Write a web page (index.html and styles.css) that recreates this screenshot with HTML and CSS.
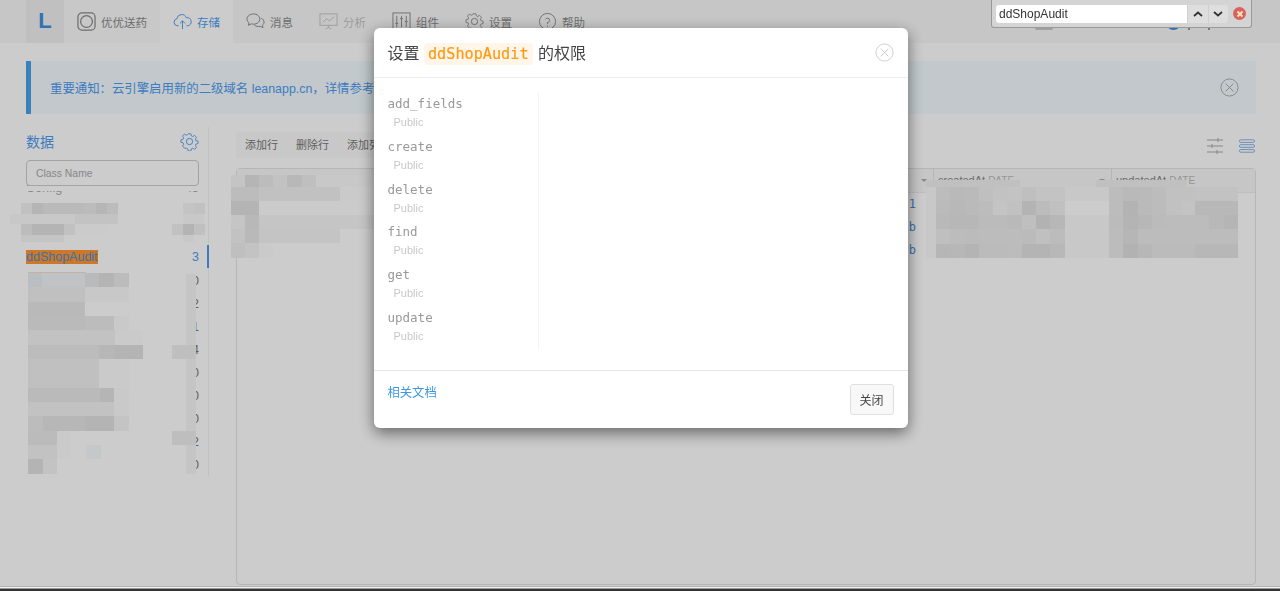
FILE: index.html
```html
<!DOCTYPE html>
<html lang="zh">
  <head>
    <meta charset="utf-8" />
    <title>ddShopAudit</title>
    <link rel="stylesheet" href="styles.css">
  </head>
  <body>
    <div id="wrap">
      <header class="topnav">
        <a class="logo" href="#">L</a>
        <a class="tab tab-app" href="#">
          <svg class="tab-icon" viewBox="0 0 20 20"><rect x="1" y="1" width="18" height="18" rx="4"/><circle cx="10" cy="10" r="6.2"/></svg>
          优优送药
        </a>
        <a class="tab active" href="#">
          <svg class="tab-icon" viewBox="0 0 20 20"><path d="M6 14.5H4.6A3.7 3.7 0 0 1 4 7.2 5.2 5.2 0 0 1 14 6a4.3 4.3 0 0 1 1.5 8.500H14"/><path d="M10 18V9.500M7.300 12 10 9.300l2.700 2.700"/></svg>
          存储
        </a>
        <a class="tab" href="#">
          <svg class="tab-icon" viewBox="0 0 20 20"><path d="M8 2C4.400 2 1 4.300 1 7.500c0 1.700 1 3 2.200 4L2.500 14l3-1.500c.8.200 1.600.3 2.500.3 3.600 0 6.500-2.300 6.500-5.300S11.600 2 8 2z"/><path d="M16 6.500c1.800.9 3 2.400 3 4.200 0 1.300-.6 2.400-1.700 3.300l.6 2.500-2.800-1.400c-2.400.6-5 0-6.500-1.600"/></svg>
          消息
        </a>
        <a class="tab tab-muted" href="#">
          <svg class="tab-icon" viewBox="0 0 20 20"><rect x="1" y="2" width="18" height="12"/><path d="M4 11l4-4 3 2.500L16 5M10 14v2.500M7 18l3-2 3 2"/></svg>
          分析
        </a>
        <a class="tab" href="#">
          <svg class="tab-icon" viewBox="0 0 20 20"><rect x="1" y="1" width="18" height="18"/><path d="M5 4v12M10 4v12M15 4v12M3.500 12h3M8.500 7h3M13.500 10h3"/></svg>
          组件
        </a>
        <a class="tab" href="#">
          <svg class="tab-icon" viewBox="0 0 20 20"><use href="#gear"/></svg>
          设置
        </a>
        <a class="tab" href="#">
          <svg class="tab-icon" viewBox="0 0 20 20"><circle cx="10" cy="10" r="8.500"/><path d="M7.800 7.800A2.300 2.300 0 1 1 10 11v1.500M10 14.300v1.200"/></svg>
          帮助
        </a>
        <div class="nav-right">
          <span class="nav-chip"></span>
          <span class="nav-avatar"></span>
          <span class="nav-tick"></span>
          <span class="nav-tick"></span>
        </div>
      </header>

      <div class="notice">
        <p>重要通知：云引擎启用新的二级域名 leanapp.cn，详情参考博客文章。</p>
        <svg class="close-icon" viewBox="0 0 20 20"><circle cx="10" cy="10" r="9"/><path d="M6 6l8 8M14 6l-8 8"/></svg>
      </div>

      <div class="content-wrap">
        <aside class="sidebar">
          <div class="side-title">
            <h2>数据</h2>
            <svg class="gear" viewBox="0 0 20 20"><use href="#gear"/></svg>
          </div>
          <input class="class-filter" type="text" placeholder="Class Name" />
          <ul class="class-list">
            <li class="clipped"><span>Config</span><b>45</b></li>
            <li><span></span><b></b></li>
            <li><span></span><b></b></li>
            <li class="selected"><span><mark>ddShopAudit</mark></span><b>3</b></li>
            <li><span></span><b>0</b></li>
            <li><span></span><b>2</b></li>
            <li><span></span><b>1</b></li>
            <li><span></span><b>4</b></li>
            <li><span></span><b>0</b></li>
            <li><span></span><b>0</b></li>
            <li><span></span><b>0</b></li>
            <li><span></span><b>2</b></li>
            <li><span></span><b>0</b></li>
          </ul>
        </aside>

        <section class="data-view">
          <div class="toolbar">
            <div class="toolbar-btns">
              <a href="#">添加行</a>
              <a href="#">删除行</a>
              <a href="#">添加列</a>
            </div>
            <div class="view-icons">
              <svg class="view-icon" viewBox="0 0 16 18"><path d="M0 3h16M0 9h16M0 15h16"/><path class="knob" d="M11 1v4M5 7v4M10 13v4"/></svg>
              <svg class="view-icon blue" viewBox="0 0 18 18"><rect x=".5" y="2" width="17" height="3" rx="1.500"/><rect x=".5" y="7.500" width="17" height="3" rx="1.500"/><rect x=".5" y="13" width="17" height="3" rx="1.500"/></svg>
            </div>
          </div>
          <div class="table-card">
            <div class="t-row t-head">
              <div class="t-col t-first"><i class="caret"></i></div>
              <div class="t-col t-date">createdAt <small>DATE</small><i class="caret"></i></div>
              <div class="t-col t-last">updatedAt <small>DATE</small></div>
            </div>
            <div class="t-row"><div class="t-col t-first t-id">1</div></div>
            <div class="t-row"><div class="t-col t-first t-id">b</div></div>
            <div class="t-row"><div class="t-col t-first t-id">b</div></div>
          </div>
        </section>
      </div>

      <!-- 打码区域 -->
      <svg class="mosaic" width="1280" height="591" shape-rendering="crispEdges">
        <g>
          <rect x="26" y="186" width="174" height="5" fill="#fff"/>
          <rect x="10" y="203" width="11" height="11" fill="#fcfcfc"/><rect x="21" y="203" width="11" height="11" fill="#eee"/><rect x="32" y="203" width="11" height="11" fill="#e0e0e0"/><rect x="43" y="203" width="42" height="11" fill="#e6e6e6"/><rect x="85" y="203" width="11" height="11" fill="#e8e8e8"/><rect x="96" y="203" width="11" height="11" fill="#e1e1e1"/><rect x="107" y="203" width="11" height="11" fill="#e8e8e8"/><rect x="118" y="203" width="22" height="11" fill="#fbfbfb"/><rect x="183" y="203" width="11" height="11" fill="#f1f1f1"/><rect x="194" y="203" width="11" height="11" fill="#eee"/>
          <rect x="10" y="214" width="108" height="10" fill="#f6f6f6"/><rect x="75" y="214" width="43" height="10" fill="#f0f0f0"/><rect x="183" y="214" width="21" height="10" fill="#f6f6f6"/>
          <rect x="10" y="224" width="11" height="11" fill="#fcfcfc"/><rect x="21" y="224" width="11" height="11" fill="#e8e8e8"/><rect x="32" y="224" width="32" height="11" fill="#dedede"/><rect x="64" y="224" width="11" height="11" fill="#eee"/><rect x="75" y="224" width="32" height="11" fill="#fafafa"/><rect x="172" y="224" width="11" height="11" fill="#eee"/><rect x="183" y="224" width="11" height="11" fill="#dfdfdf"/><rect x="194" y="224" width="11" height="11" fill="#ededed"/>
          <rect x="21" y="235" width="43" height="7" fill="#f1f1f1"/><rect x="75" y="235" width="21" height="7" fill="#fff"/><rect x="183" y="235" width="11" height="7" fill="#f6f6f6"/>
          <rect x="28" y="272" width="58" height="2" fill="#f4dcc8"/>
          <rect x="17" y="274" width="11" height="200" fill="#fbfbfb"/><rect x="186" y="274" width="10" height="200" fill="#f3f3f3"/>
          <rect x="28" y="273" width="14" height="14" fill="#e3eaee"/><rect x="42" y="273" width="43" height="14" fill="#ebf0f3"/><rect x="85" y="273" width="14" height="14" fill="#e4e6e8"/><rect x="99" y="273" width="15" height="14" fill="#dedede"/><rect x="114" y="273" width="15" height="14" fill="#e8e8e8"/><rect x="129" y="273" width="14" height="14" fill="#fbfbfb"/>
          <rect x="28" y="287" width="57" height="15" fill="#ececec"/><rect x="85" y="287" width="44" height="15" fill="#f7f7f7"/>
          <rect x="28" y="302" width="57" height="14" fill="#e5e5e5"/><rect x="85" y="302" width="30" height="14" fill="#fdfdfd"/>
          <rect x="28" y="316" width="57" height="14" fill="#e6e6e6"/><rect x="85" y="316" width="29" height="14" fill="#e9e9e9"/><rect x="114" y="316" width="15" height="14" fill="#f8f8f8"/>
          <rect x="28" y="330" width="87" height="15" fill="#efefef"/><rect x="115" y="330" width="28" height="15" fill="#f9f9f9"/>
          <rect x="28" y="345" width="71" height="14" fill="#e8e8e8"/><rect x="99" y="345" width="15" height="14" fill="#e2e2e2"/><rect x="114" y="345" width="29" height="14" fill="#dedede"/><rect x="172" y="345" width="24" height="14" fill="#ebebeb"/>
          <rect x="28" y="359" width="71" height="29" fill="#ededed"/><rect x="99" y="359" width="30" height="29" fill="#f9f9f9"/>
          <rect x="28" y="388" width="72" height="14" fill="#e6e6e6"/><rect x="100" y="388" width="14" height="14" fill="#e0e0e0"/><rect x="114" y="388" width="15" height="28" fill="#f8f8f8"/>
          <rect x="28" y="402" width="86" height="14" fill="#efefef"/>
          <rect x="28" y="416" width="15" height="15" fill="#e9e9e9"/><rect x="43" y="416" width="43" height="15" fill="#e2e2e2"/><rect x="86" y="416" width="28" height="15" fill="#dfdfdf"/><rect x="114" y="416" width="15" height="15" fill="#f2f2f2"/>
          <rect x="28" y="431" width="29" height="14" fill="#e7e7e7"/><rect x="57" y="431" width="14" height="14" fill="#f9f9f9"/><rect x="71" y="431" width="44" height="14" fill="#fdfdfd"/><rect x="172" y="431" width="24" height="14" fill="#eaeaea"/>
          <rect x="28" y="445" width="29" height="14" fill="#efefef"/><rect x="57" y="445" width="14" height="14" fill="#f9f9f9"/><rect x="86" y="445" width="15" height="14" fill="#f4f5f7"/>
          <rect x="28" y="459" width="15" height="15" fill="#dfdfdf"/><rect x="43" y="459" width="14" height="15" fill="#f0f0f0"/><rect x="57" y="459" width="14" height="15" fill="#fbfbfb"/>
        </g>
        <g>
          <rect x="231" y="175" width="14" height="12" fill="#f1f1f1"/><rect x="245" y="175" width="14" height="12" fill="#e0e0e0"/><rect x="259" y="175" width="14" height="12" fill="#e8e8e8"/><rect x="273" y="175" width="14" height="12" fill="#efefef"/><rect x="287" y="175" width="15" height="12" fill="#e3e3e3"/><rect x="302" y="175" width="14" height="12" fill="#ebebeb"/><rect x="316" y="175" width="58" height="12" fill="#f6f6f6"/>
          <rect x="231" y="187" width="28" height="14" fill="#e9e9e9"/><rect x="259" y="187" width="81" height="14" fill="#eee"/><rect x="340" y="187" width="34" height="14" fill="#f9f9f9"/>
          <rect x="231" y="201" width="28" height="14" fill="#dfdfdf"/><rect x="259" y="201" width="115" height="14" fill="#fafafa"/>
          <rect x="231" y="215" width="14" height="14" fill="#f3f3f3"/><rect x="245" y="215" width="14" height="14" fill="#e4e4e4"/><rect x="259" y="215" width="115" height="14" fill="#f3f3f3"/>
          <rect x="231" y="229" width="14" height="14" fill="#efefef"/><rect x="245" y="229" width="14" height="14" fill="#e5e5e5"/><rect x="259" y="229" width="81" height="14" fill="#f2f2f2"/><rect x="340" y="229" width="34" height="14" fill="#fbfbfb"/>
          <rect x="231" y="243" width="14" height="15" fill="#ebebeb"/><rect x="245" y="243" width="14" height="15" fill="#f0f0f0"/><rect x="259" y="243" width="14" height="15" fill="#f9f9f9"/>
        </g>
        <g>
          <rect x="926" y="180" width="94" height="7" fill="#ececec"/><rect x="1096" y="180" width="90" height="7" fill="#ececec"/>
          <rect x="926" y="187" width="10" height="71" fill="#f7f7f7"/><rect x="1065" y="187" width="44" height="71" fill="#f6f6f6"/><rect x="1065" y="201" width="15" height="14" fill="#fbfbfb"/><rect x="1080" y="201" width="29" height="14" fill="#fbfbfb"/>
          <rect x="936" y="187" width="14" height="14" fill="#e8e8e8"/><rect x="950" y="187" width="15" height="14" fill="#e5e5e5"/><rect x="965" y="187" width="14" height="14" fill="#e6e6e6"/><rect x="979" y="187" width="14" height="14" fill="#ebebeb"/><rect x="993" y="187" width="14" height="14" fill="#efefef"/><rect x="1007" y="187" width="15" height="14" fill="#f0f0f0"/><rect x="1022" y="187" width="14" height="14" fill="#ebebeb"/><rect x="1036" y="187" width="14" height="14" fill="#f0f0f0"/><rect x="1050" y="187" width="15" height="14" fill="#f0f0f0"/>
          <rect x="936" y="201" width="14" height="14" fill="#e7e7e7"/><rect x="950" y="201" width="15" height="14" fill="#e4e4e4"/><rect x="965" y="201" width="14" height="14" fill="#e6e6e6"/><rect x="979" y="201" width="14" height="14" fill="#e8e8e8"/><rect x="993" y="201" width="14" height="14" fill="#f2f2f2"/><rect x="1007" y="201" width="15" height="14" fill="#eee"/><rect x="1022" y="201" width="14" height="14" fill="#dedede"/><rect x="1036" y="201" width="14" height="14" fill="#e9e9e9"/><rect x="1050" y="201" width="15" height="14" fill="#ececec"/>
          <rect x="936" y="215" width="14" height="14" fill="#e5e5e5"/><rect x="950" y="215" width="15" height="14" fill="#e2e2e2"/><rect x="965" y="215" width="14" height="14" fill="#e2e2e2"/><rect x="979" y="215" width="14" height="14" fill="#e7e7e7"/><rect x="993" y="215" width="14" height="14" fill="#e7e7e7"/><rect x="1007" y="215" width="15" height="14" fill="#e5e5e5"/><rect x="1022" y="215" width="14" height="14" fill="#ebebeb"/><rect x="1036" y="215" width="14" height="14" fill="#dcdcdc"/><rect x="1050" y="215" width="15" height="14" fill="#e2e2e2"/>
          <rect x="936" y="229" width="14" height="15" fill="#ebebeb"/><rect x="950" y="229" width="15" height="15" fill="#e9e9e9"/><rect x="965" y="229" width="14" height="15" fill="#e7e7e7"/><rect x="979" y="229" width="14" height="15" fill="#e9e9e9"/><rect x="993" y="229" width="14" height="15" fill="#e9e9e9"/><rect x="1007" y="229" width="15" height="15" fill="#e9e9e9"/><rect x="1022" y="229" width="14" height="15" fill="#e7e7e7"/><rect x="1036" y="229" width="14" height="15" fill="#ededed"/><rect x="1050" y="229" width="15" height="15" fill="#e9e9e9"/>
          <rect x="936" y="244" width="14" height="14" fill="#e1e1e1"/><rect x="950" y="244" width="15" height="14" fill="#e2e2e2"/><rect x="965" y="244" width="14" height="14" fill="#dfdfdf"/><rect x="979" y="244" width="14" height="14" fill="#e7e7e7"/><rect x="993" y="244" width="14" height="14" fill="#e7e7e7"/><rect x="1007" y="244" width="15" height="14" fill="#e9e9e9"/><rect x="1022" y="244" width="14" height="14" fill="#dfdfdf"/><rect x="1036" y="244" width="14" height="14" fill="#dfdfdf"/><rect x="1050" y="244" width="15" height="14" fill="#e3e3e3"/>
          <rect x="1109" y="187" width="14" height="14" fill="#e8e8e8"/><rect x="1123" y="187" width="15" height="14" fill="#e5e5e5"/><rect x="1138" y="187" width="14" height="14" fill="#e6e6e6"/><rect x="1152" y="187" width="14" height="14" fill="#e9e9e9"/><rect x="1166" y="187" width="15" height="14" fill="#eee"/><rect x="1181" y="187" width="14" height="14" fill="#eee"/><rect x="1195" y="187" width="14" height="14" fill="#efefef"/><rect x="1209" y="187" width="15" height="14" fill="#efefef"/><rect x="1224" y="187" width="14" height="14" fill="#efefef"/>
          <rect x="1109" y="201" width="14" height="14" fill="#e9e9e9"/><rect x="1123" y="201" width="15" height="14" fill="#dddddd"/><rect x="1138" y="201" width="14" height="14" fill="#e6e6e6"/><rect x="1152" y="201" width="14" height="14" fill="#e8e8e8"/><rect x="1166" y="201" width="15" height="14" fill="#eee"/><rect x="1181" y="201" width="14" height="14" fill="#f0f0f0"/><rect x="1195" y="201" width="43" height="14" fill="#e4e4e4"/>
          <rect x="1109" y="215" width="14" height="14" fill="#e7e7e7"/><rect x="1123" y="215" width="15" height="14" fill="#dfdfdf"/><rect x="1138" y="215" width="14" height="14" fill="#e2e2e2"/><rect x="1152" y="215" width="14" height="14" fill="#e7e7e7"/><rect x="1166" y="215" width="29" height="14" fill="#e9e9e9"/><rect x="1195" y="215" width="14" height="14" fill="#e9e9e9"/><rect x="1209" y="215" width="15" height="14" fill="#e4e4e4"/><rect x="1224" y="215" width="14" height="14" fill="#e0e0e0"/>
          <rect x="1109" y="229" width="14" height="15" fill="#e9e9e9"/><rect x="1123" y="229" width="15" height="15" fill="#e1e1e1"/><rect x="1138" y="229" width="100" height="15" fill="#e9e9e9"/>
          <rect x="1109" y="244" width="14" height="14" fill="#e9e9e9"/><rect x="1123" y="244" width="15" height="14" fill="#dcdcdc"/><rect x="1138" y="244" width="14" height="14" fill="#e2e2e2"/><rect x="1152" y="244" width="43" height="14" fill="#e7e7e7"/><rect x="1195" y="244" width="29" height="14" fill="#e2e2e2"/><rect x="1224" y="244" width="14" height="14" fill="#e2e2e2"/>
        </g>
      </svg>
    </div>

    <div class="modal-backdrop">
      <div class="modal">
        <div class="modal-header">
          <h3>设置 <code>ddShopAudit</code> 的权限</h3>
          <svg class="close-icon" viewBox="0 0 20 20"><circle cx="10" cy="10" r="9"/><path d="M6 6l8 8M14 6l-8 8"/></svg>
        </div>
        <div class="modal-body">
          <ul class="perm-list">
            <li><code>add_fields</code><span>Public</span></li>
            <li><code>create</code><span>Public</span></li>
            <li><code>delete</code><span>Public</span></li>
            <li><code>find</code><span>Public</span></li>
            <li><code>get</code><span>Public</span></li>
            <li><code>update</code><span>Public</span></li>
          </ul>
        </div>
        <div class="modal-footer">
          <a href="#">相关文档</a>
          <button type="button">关闭</button>
        </div>
      </div>
    </div>

    <!-- 浏览器查找栏 -->
    <div class="findbar">
      <input type="text" value="ddShopAudit" />
      <div class="find-btns">
        <button type="button"><svg viewBox="0 0 10 6"><path d="M1 5l4-3.500L9 5"/></svg></button>
        <button type="button"><svg viewBox="0 0 10 6"><path d="M1 1l4 3.500L9 1"/></svg></button>
      </div>
      <span class="find-close"><svg viewBox="0 0 12 12"><path d="M3.500 3.500l5 5M8.500 3.500l-5 5"/></svg></span>
    </div>

    <div class="dock"></div>

    <svg class="defs" width="0" height="0">
      <symbol id="gear" viewBox="0 0 20 20">
        <path d="M8.300 1h3.400l.5 2.500 1.600.7 2.200-1.400 2.200 2.400-1.400 2.100.7 1.700 2.500.5v3l-2.500.5-.7 1.700 1.400 2.100-2.200 2.400-2.200-1.400-1.600.7-.5 2.500H8.300l-.5-2.500-1.600-.7L4 17.700l-2.200-2.400 1.400-2.100-.7-1.700L0 11V8l2.500-.5.7-1.700-1.400-2.100L4 1.300l2.200 1.400 1.600-.7z" transform="translate(1 1) scale(.9)"/>
        <circle cx="10" cy="10" r="3.300"/>
      </symbol>
    </svg>
  </body>
</html>
```

FILE: styles.css
```css
* {
  margin: 0;
  padding: 0;
  box-sizing: border-box;
}

html,
body {
  height: 100%;
  overflow: hidden;
}

body {
  font-family: 'Liberation Sans', 'Noto Sans CJK SC', sans-serif;
  color: #666;
  background-color: #fff;
}

li {
  list-style: none;
}

a {
  text-decoration: none;
}

code {
  font-family: 'DejaVu Sans Mono', 'Noto Sans CJK SC', monospace;
}

#wrap {
  height: 586px;
  position: relative;
}

.defs {
  position: absolute;
}

/* 顶部导航 */
.topnav {
  display: flex;
  height: 43px;
  padding-left: 26px;
  background-color: #f8f8f8;
}

.logo {
  width: 38px;
  line-height: 42px;
  text-align: center;
  font-size: 22px;
  font-weight: bold;
  color: #3d8fe0;
  background-color: #f0f0f0;
}

.tab {
  display: flex;
  align-items: center;
  gap: 5px;
  padding: 0 13px;
  font-size: 11.500px;
  color: #8a8a8a;
  white-space: nowrap;
}

.tab-app {
  background-color: #fafafa;
}

.tab.active {
  color: #4e9cf0;
  background-color: #fff;
}

.tab-muted {
  color: #c4c4c4;
}

.tab-icon {
  width: 19px;
  height: 19px;
  fill: none;
  stroke: currentColor;
  stroke-width: 1;
}

.tab-app .tab-icon {
  stroke-width: 1.300;
}

.nav-right {
  display: flex;
  align-items: flex-end;
  margin-left: auto;
  padding: 0 52px 13px 0;
}

.nav-chip {
  width: 18px;
  height: 14px;
  margin-right: 113px;
  background-color: #c8c8c8;
  border-radius: 2px;
}

.nav-avatar {
  width: 15px;
  height: 15px;
  margin-right: 7px;
  border-radius: 50%;
  background-color: #3d8fe0;
}

.nav-tick {
  width: 2px;
  height: 3px;
  margin-right: 18px;
  background-color: #999;
}

/* 通知 */
.notice {
  display: flex;
  align-items: center;
  justify-content: space-between;
  height: 53px;
  margin: 18px 24px 0 26px;
  padding: 0 17px 0 19px;
  font-size: 12.400px;
  color: #4e9cf0;
  border-left: 5px solid #4aa3ec;
  background-color: #f3fbff;
}

.notice .close-icon {
  stroke: #aaa;
}

.close-icon {
  width: 19px;
  height: 19px;
  fill: none;
  stroke: #ccc;
  stroke-width: 1;
}

.content-wrap {
  display: flex;
  margin: 13px 24px 0 26px;
}

/* 左侧列表 */
.sidebar {
  width: 183px;
  height: 349px;
  flex: none;
  padding-right: 9px;
  border-right: 1px solid #f2f2f2;
  position: relative;
}

.side-title {
  display: flex;
  align-items: center;
  justify-content: space-between;
  height: 20px;
  margin: 4px 0 9px;
}

.side-title h2 {
  font-size: 14px;
  font-weight: normal;
  color: #4e9cf0;
}

.gear {
  width: 19px;
  height: 19px;
  fill: none;
  stroke: #4e9cf0;
  stroke-width: 1;
}

.class-filter {
  display: block;
  width: 100%;
  height: 26px;
  padding: 0 9px;
  font-family: inherit;
  font-size: 10.400px;
  border: 1px solid #ccc;
  border-radius: 4px;
  background-color: #fff;
  position: relative;
  z-index: 1;
}

.class-filter::placeholder {
  color: #aaa;
}

.class-list {
  margin-top: -10px;
}

.class-list > li {
  display: flex;
  align-items: center;
  justify-content: space-between;
  height: 23px;
  font-size: 12.500px;
  color: #777;
}

.class-list > li.clipped {
  color: #aaa;
}

.class-list b {
  font-weight: normal;
}

.class-list > li.selected {
  margin-bottom: 1px;
  color: #4e9cf0;
  position: relative;
}

.class-list > li.selected::after {
  content: '';
  position: absolute;
  top: 0;
  right: -10px;
  width: 2px;
  height: 23px;
  background-color: #4e9cf0;
}

mark {
  color: #4a90d9;
  background-color: #ff9632;
}

/* 右侧数据 */
.data-view {
  flex: 1;
  margin-left: 27px;
}

.toolbar {
  display: flex;
  justify-content: space-between;
  height: 26px;
  margin-top: 5px;
}

.toolbar-btns {
  display: flex;
  gap: 18px;
  width: 600px;
  padding-left: 9px;
  line-height: 26px;
  border-radius: 3px;
  background-color: #fafafa;
}

.toolbar-btns > a {
  font-size: 11px;
  color: #777;
}

.view-icons {
  display: flex;
  align-items: center;
  gap: 16px;
  padding: 2px 1px 0 0;
}

.view-icon {
  width: 16px;
  height: 18px;
  fill: none;
  stroke: #aaa;
  stroke-width: 1;
}

.view-icon.blue {
  stroke: #7ab0e4;
}

.table-card {
  height: 417px;
  margin-top: 10px;
  border: 1px solid #e4e4e4;
  border-radius: 4px;
}

.t-row {
  display: flex;
  height: 23px;
}

.t-head {
  height: 24px;
  border-bottom: 1px solid #eee;
  background-color: #f8f8f8;
  font-size: 11px;
  line-height: 23px;
  color: #888;
}

.t-col {
  position: relative;
}

.t-first {
  width: 696px;
  padding-right: 17px;
  text-align: right;
}

.t-date {
  width: 178px;
  padding-left: 4px;
  border-left: 1px solid #e4e4e4;
}

.t-last {
  flex: 1;
  padding-left: 4px;
  border-left: 1px solid #e4e4e4;
}

.t-head small {
  font-size: 10px;
  color: #bbb;
}

.caret {
  position: absolute;
  top: 10px;
  right: 6px;
  border: 3px solid transparent;
  border-top-color: #aaa;
}

.t-id {
  font-family: 'DejaVu Sans Mono', monospace;
  font-size: 12px;
  line-height: 23px;
  color: #4a90d9;
}

/* 打码 */
.mosaic {
  position: absolute;
  top: 0;
  left: 0;
  filter: brightness(1.015);
}

/* 弹窗 */
.modal-backdrop {
  position: fixed;
  top: 0;
  right: 0;
  bottom: 0;
  left: 0;
  z-index: 10;
  display: flex;
  justify-content: center;
  align-items: flex-start;
  padding: 28px 0 0 1px;
  background-color: rgba(0, 0, 0, 0.2);
}

.modal {
  width: 534px;
  border-radius: 6px;
  background-color: #fff;
  box-shadow: 0 5px 15px rgba(0, 0, 0, 0.5);
}

.modal-header {
  display: flex;
  align-items: center;
  justify-content: space-between;
  height: 50px;
  padding: 0 14px;
  border-bottom: 1px solid #eee;
}

.modal-header h3 {
  margin-bottom: 2px;
  font-size: 16px;
  font-weight: normal;
  color: #444;
}

.modal-header code {
  margin-right: 1px;
  padding: 2px 4px;
  font-size: 15.200px;
  color: #ff9a14;
  border-radius: 4px;
  background-color: #fff6e9;
  -webkit-text-stroke: 0.2px #ff9a14;
}

.modal-body {
  height: 293px;
  padding: 14px 14px 0;
  border-bottom: 1px solid #e5e5e5;
}

.perm-list {
  width: 151px;
  height: 258px;
  padding-top: 1px;
  border-right: 1px solid #f5f5f5;
}

.perm-list > li {
  height: 42.800px;
}

.perm-list code {
  display: block;
  height: 21px;
  font-size: 12.500px;
  line-height: 22px;
  color: #999;
}

.perm-list span {
  display: block;
  padding-left: 6px;
  font-size: 11px;
  line-height: 16px;
  color: #c8c8c8;
}

.modal-footer {
  display: flex;
  align-items: flex-start;
  justify-content: space-between;
  height: 57px;
  padding: 13px 14px 0;
}

.modal-footer > a {
  font-size: 12.300px;
  line-height: 18px;
  color: #3d97e0;
}

.modal-footer > button {
  width: 44px;
  height: 31px;
  font-family: inherit;
  font-size: 12px;
  color: #444;
  border: 1px solid #e0e0e0;
  border-radius: 3px;
  background-color: #f8f8f8;
}

/* 查找栏 */
.findbar {
  position: fixed;
  top: 0;
  left: 991px;
  z-index: 20;
  display: flex;
  align-items: center;
  width: 261px;
  height: 28px;
  padding: 0 4px;
  border: 1px solid #999;
  border-top: 0;
  border-radius: 0 0 3px 3px;
  background-color: #d4d4d4;
}

.findbar > input {
  width: 191px;
  height: 18px;
  padding: 0 3px;
  font-family: inherit;
  font-size: 12px;
  color: #333;
  border: 0;
  border-radius: 3px 0 0 3px;
  background-color: #fff;
}

.find-btns {
  display: flex;
  width: 41px;
  height: 18px;
  border-radius: 0 3px 3px 0;
  background-color: #dedede;
}

.find-btns > button {
  flex: 1;
  display: flex;
  align-items: center;
  justify-content: center;
  border: 0;
  border-left: 1px solid #cfcfcf;
  background-color: transparent;
}

.find-btns svg {
  width: 10px;
  height: 6px;
  fill: none;
  stroke: #333;
  stroke-width: 1.800;
}

.find-close {
  display: flex;
  align-items: center;
  justify-content: center;
  width: 13px;
  height: 13px;
  margin-left: 5px;
  border-radius: 50%;
  background-color: #d9625e;
}

.find-close svg {
  width: 12px;
  height: 12px;
  fill: none;
  stroke: #f8e7c0;
  stroke-width: 1.800;
}

.dock {
  position: fixed;
  left: 0;
  right: 0;
  bottom: 0;
  z-index: 20;
  height: 5px;
  border-top: 1px solid #b5b5b5;
  background: linear-gradient(#ededed 0, #ededed 1px, #9a9a9a 1px, #9a9a9a 2px, #333 2px);
}
```
